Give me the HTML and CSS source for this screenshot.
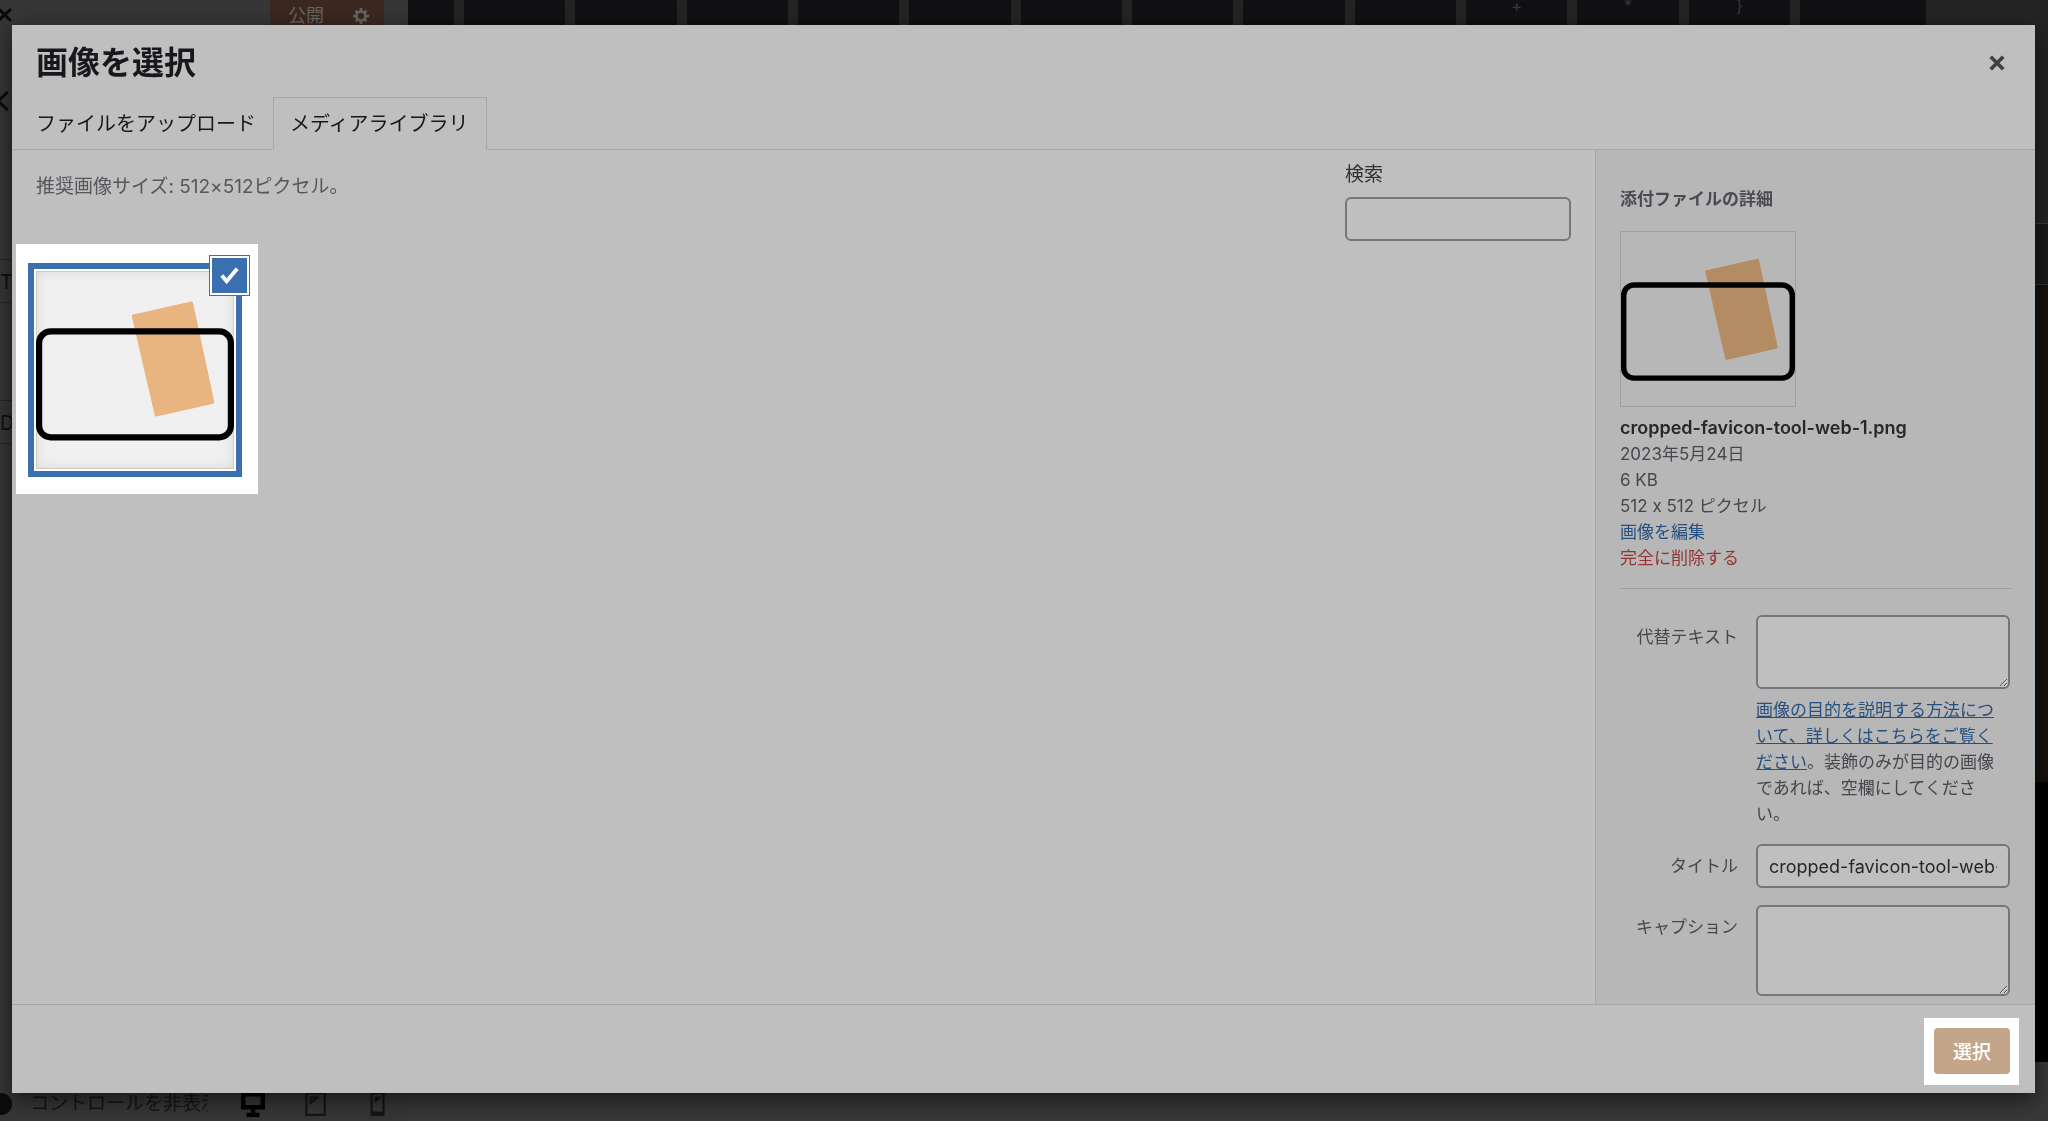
FILE: index.html
```html
<!DOCTYPE html>
<html lang="ja">
<head>
    <meta charset="UTF-8">
    <title>画像を選択</title>
    <link rel="stylesheet" href="styles.css">
</head>
<body>
    <!-- Customizer behind the modal -->
    <div class="customizer">
        <div class="controls">
            <div class="controls_header">
                <svg class="cut_x" viewBox="0 0 12 14"><path d="M-2 0 L11 13 M11 1 L-2 13" /></svg>
                <div class="publish">
                    <span>公開</span>
                    <svg class="gear" viewBox="0 0 20 20"><circle cx="10" cy="10" r="5" /><path d="M10 1v4M10 15v4M1 10h4M15 10h4M4 4l3 3M13 13l3 3M16 4l-3 3M7 13l-3 3" /></svg>
                </div>
            </div>
            <div class="controls_title">
                <svg class="cut_x" viewBox="0 0 12 20"><path d="M8 1 L-2 10 L8 19" /></svg>
            </div>
            <div class="controls_field">To</div>
            <div class="controls_field">D</div>
            <div class="controls_footer">
                <span class="collapse_dot"></span>
                <span class="collapse_text">コントロールを非表示</span>
                <svg class="device on" viewBox="0 0 24 24"><path d="M3 3h18v12H3z M12 16v5 M6 22h12" /></svg>
                <svg class="device" viewBox="0 0 24 24"><path d="M4 2h17v20H4z M8 11V6h6z" /></svg>
                <svg class="device" viewBox="0 0 24 24"><path d="M7 2h11v20H7z M7 20h11 M11 9V6h3z" /></svg>
            </div>
        </div>
        <div class="preview">
            <div class="keys">
                <span class="key key_half"></span><span class="key"></span><span class="key"></span><span class="key"></span><span class="key"></span><span class="key"></span><span class="key"></span><span class="key"></span><span class="key"></span><span class="key"></span><span class="key">+</span><span class="key">*</span><span class="key">}</span><span class="key key_wide"></span>
            </div>
            <div class="preview_line"></div>
            <div class="preview_photo"></div>
            <div class="preview_black"></div>
            <div class="preview_foot"></div>
        </div>
    </div>

    <!-- Media modal -->
    <div class="modal" role="dialog" aria-labelledby="modal_title">
        <div class="modal_header">
            <div class="title_row">
                <h1 id="modal_title">画像を選択</h1>
                <button class="close" type="button" aria-label="閉じる">
                    <svg viewBox="0 0 16 16"><path d="M3 3l10 10M13 3L3 13" /></svg>
                </button>
            </div>
            <div class="tabs" role="tablist">
                <button class="tab" type="button" role="tab">ファイルをアップロード</button>
                <button class="tab active" type="button" role="tab" aria-selected="true">メディアライブラリ</button>
                <span class="tabs_rest"></span>
            </div>
        </div>

        <div class="modal_body">
            <div class="browser">
                <div class="toolbar">
                    <p class="suggested">推奨画像サイズ: 512×512ピクセル。</p>
                    <div class="search">
                        <label for="media_search">検索</label>
                        <input type="search" id="media_search">
                    </div>
                </div>
                <div class="spotlight spotlight_image">
                    <div class="attachment">
                        <svg class="thumb" viewBox="0 0 512 512">
                            <path class="card" d="M249 113 401 79Q405 78 406 82L461 338Q462 342 458 343L312 376Q308 377 307 373L248 118Q247 114 249 113z" />
                            <rect class="frame" x="8" y="156" width="496" height="274" rx="30" />
                        </svg>
                        <button class="check" type="button" aria-label="選択を解除">
                            <svg viewBox="0 0 24 24"><path d="M4 12l5 6L20 5" /></svg>
                        </button>
                    </div>
                </div>
            </div>

            <div class="sidebar">
                <h2>添付ファイルの詳細</h2>
                <div class="details">
                    <svg class="preview_img" viewBox="0 0 512 512">
                        <path class="card" d="M249 113 401 79Q405 78 406 82L461 338Q462 342 458 343L312 376Q308 377 307 373L248 118Q247 114 249 113z" />
                        <rect class="frame" x="8" y="156" width="496" height="274" rx="30" />
                    </svg>
                    <div class="filename">cropped-favicon-tool-web-1.png</div>
                    <div>2023年5月24日</div>
                    <div>6 KB</div>
                    <div>512 x 512 ピクセル</div>
                    <a href="#" class="edit">画像を編集</a>
                    <a href="#" class="delete">完全に削除する</a>
                </div>
                <div class="setting">
                    <label for="alt_text">代替テキスト</label>
                    <div class="field">
                        <textarea id="alt_text" class="alt"></textarea>
                        <p class="help"><a href="#">画像の目的を説明する方法について、詳しくはこちらをご覧ください</a>。装飾のみが目的の画像であれば、空欄にしてください。</p>
                    </div>
                </div>
                <div class="setting">
                    <label for="img_title">タイトル</label>
                    <div class="field"><input type="text" id="img_title" value="cropped-favicon-tool-web-1.png"></div>
                </div>
                <div class="setting">
                    <label for="caption">キャプション</label>
                    <div class="field"><textarea id="caption" class="caption"></textarea></div>
                </div>
            </div>
        </div>

        <div class="modal_footer">
            <div class="spotlight spotlight_button">
                <button class="select" type="button">選択</button>
            </div>
        </div>
    </div>
</body>
</html>
```
FILE: styles.css
```css
* {
    box-sizing: border-box;
}

body {
    margin: 0;
    height: 100vh;
    overflow: hidden;
    font-family: Inter, "Noto Sans CJK JP", sans-serif;
    font-size: 17px;
    line-height: 26px;
    font-feature-settings: "calt" 0;
    color: #45474d;
    background: #343434;
}

h1, h2, p {
    margin: 0;
}

button, input, textarea {
    font-family: inherit;
    font-size: inherit;
}

/* Customizer */
.customizer {
    display: flex;
    height: 100vh;
    color: #101010;
}

.controls {
    display: flex;
    flex-direction: column;
    width: 408px;
    background: #363636;
}

.controls_header {
    display: flex;
    justify-content: space-between;
    height: 64px;
    padding-right: 24px;
}

.cut_x {
    width: 12px;
    height: 20px;
    margin-top: 5px;
    fill: none;
    stroke: #0a0a0a;
    stroke-width: 3;
}

.publish {
    display: flex;
    justify-content: space-between;
    width: 114px;
    height: 48px;
    padding: 3px 14px 0 18px;
    background: #3a2821;
    color: #696260;
    font-size: 18px;
}

.gear {
    width: 18px;
    height: 18px;
    margin-top: 4px;
    fill: none;
    stroke: #696260;
    stroke-width: 3;
}

.controls_title {
    height: 195px;
    padding-top: 22px;
}

.controls_field {
    height: 44px;
    margin-bottom: 97px;
    border: 1px solid #262626;
    border-left: 0;
    line-height: 44px;
    font-size: 20px;
}

.controls_footer {
    display: flex;
    align-items: center;
    gap: 18px;
    height: 35px;
    margin-top: auto;
    color: #151515;
}

.collapse_dot {
    width: 12px;
    height: 22px;
    border-radius: 0 11px 11px 0;
    background: #0c0c0c;
}

.collapse_text {
    width: 178px;
    margin-right: 14px;
    overflow: hidden;
    white-space: nowrap;
    font-size: 19px;
}

.device {
    width: 26px;
    height: 26px;
    margin-right: 18px;
    fill: none;
    stroke: #151515;
    stroke-width: 2;
}

.device.on {
    stroke: #000;
    stroke-width: 4;
}

.preview {
    display: flex;
    flex-direction: column;
    flex: 1;
}

.keys {
    display: flex;
    gap: 10px;
    height: 224px;
    padding-right: 122px;
    background: #242424;
    border-bottom: 1px solid #3a3a3a;
}

.key {
    flex: 1;
    height: 60px;
    background: #111114;
    color: #38383c;
    text-align: center;
    line-height: 12px;
}

.key_half {
    flex: 0 0 46px;
}

.key_wide {
    flex: 0 0 126px;
}

.preview_line {
    height: 61px;
    background: #1a1a1c;
    border-bottom: 1px solid #3a3432;
}

.preview_photo {
    height: 497px;
    background: #17110d;
}

.preview_black {
    flex: 1;
    background: #000;
}

.preview_foot {
    height: 59px;
    background: #383838;
}

/* Modal */
.modal {
    position: fixed;
    top: 25px;
    right: 13px;
    bottom: 28px;
    left: 12px;
    display: flex;
    flex-direction: column;
    background: #bfbfbf;
    box-shadow: 0 6px 20px rgba(0, 0, 0, 0.6);
}

.title_row {
    display: flex;
    justify-content: space-between;
    align-items: center;
    height: 72px;
    padding: 4px 24px 0;
}

h1 {
    font-size: 32px;
    line-height: 48px;
    color: #17181c;
}

.close {
    width: 28px;
    height: 28px;
    padding: 4px;
    border: 0;
    background: none;
}

.close svg {
    display: block;
    width: 20px;
    height: 20px;
    fill: none;
    stroke: #404040;
    stroke-width: 3;
}

.tabs {
    display: flex;
    height: 53px;
}

.tab {
    padding: 0 17px 3px 16px;
    border: 1px solid transparent;
    border-bottom-color: #a8a8a8;
    background: none;
    font-size: 20px;
    color: #17181c;
}

.tab:first-child {
    padding-left: 23px;
    padding-right: 16px;
}

.tab.active {
    border-color: #a8a8a8;
    border-bottom-color: transparent;
}

.tabs_rest {
    flex: 1;
    border-bottom: 1px solid #a8a8a8;
}

.modal_body {
    display: flex;
    flex: 1;
    min-height: 0;
}

.browser {
    flex: 1;
}

.toolbar {
    display: flex;
    justify-content: space-between;
    height: 94px;
    padding: 12px 24px 0;
}

.suggested {
    padding-top: 12px;
    font-size: 19px;
    color: #55575c;
}

.search {
    width: 226px;
    font-size: 19px;
    color: #2e3034;
}

.search label {
    display: block;
    margin-bottom: 9px;
}

input, textarea {
    display: block;
    width: 100%;
    border: 2px solid #747678;
    border-radius: 6px;
    background: #bfbfbf;
    color: #25272b;
}

input {
    height: 44px;
    padding: 0 11px;
    font-size: 18px;
}

/* Undimmed areas */
.spotlight {
    background: #fff;
}

.spotlight_image {
    width: 242px;
    margin-left: 4px;
    padding: 19px 16px 17px 12px;
}

.attachment {
    position: relative;
    width: 214px;
    height: 214px;
    padding: 2px;
    border: 6px solid #3a70b0;
    background: #fff;
}

.thumb {
    display: block;
    width: 100%;
    height: 100%;
    background: #f0f0f0;
    box-shadow: inset 0 0 14px rgba(0, 0, 0, 0.1), inset 0 0 0 1px rgba(0, 0, 0, 0.1);
}

.card {
    fill: #e8b581;
}

.frame {
    fill: none;
    stroke: #000;
    stroke-width: 16;
}

.check {
    position: absolute;
    top: -13px;
    right: -13px;
    width: 39px;
    height: 39px;
    padding: 6px;
    border: 2px solid #fff;
    box-shadow: 0 0 0 1px #3a70b0;
    background: #3a70b0;
}

.check svg {
    display: block;
    width: 23px;
    height: 23px;
    fill: none;
    stroke: #fff;
    stroke-width: 4;
}

/* Attachment details */
.sidebar {
    width: 440px;
    padding: 36px 24px 0;
    overflow: hidden;
    border-left: 1px solid #a8a8a8;
    background: #b7b7b7;
}

h2 {
    margin-bottom: 19px;
    font-size: 17px;
    line-height: 26px;
    color: #494b51;
}

.details {
    display: flex;
    flex-direction: column;
    align-items: flex-start;
    margin-bottom: 26px;
    padding-bottom: 17px;
    border-bottom: 1px solid #a0a0a0;
}

.preview_img {
    width: 176px;
    height: 176px;
    margin-bottom: 8px;
    border: 1px solid #a0a0a0;
}

.preview_img .card {
    fill: #b48c63;
}

.filename {
    font-size: 18px;
    font-weight: 600;
    color: #25272b;
}

a {
    color: #28507f;
}

.edit, .delete {
    text-decoration: none;
}

.delete {
    color: #943436;
}

.setting {
    display: flex;
    gap: 18px;
    margin-bottom: 17px;
    padding-right: 1px;
}

.setting label {
    flex: 1;
    padding-top: 9px;
    text-align: right;
}

.field {
    width: 254px;
}

.alt {
    height: 74px;
    margin-bottom: 8px;
}

.help {
    padding-right: 8px;
}

.caption {
    height: 91px;
}

/* Footer */
.modal_footer {
    display: flex;
    justify-content: flex-end;
    align-items: center;
    height: 89px;
    padding-right: 16px;
    padding-top: 4px;
    border-top: 1px solid #a8a8a8;
}

.spotlight_button {
    padding: 10px 9px 11px 10px;
}

.select {
    display: block;
    width: 76px;
    height: 46px;
    padding: 0;
    border: 0;
    border-radius: 4px;
    background: #c3a68a;
    color: #fff;
    font-size: 19px;
    font-weight: 500;
}
```
